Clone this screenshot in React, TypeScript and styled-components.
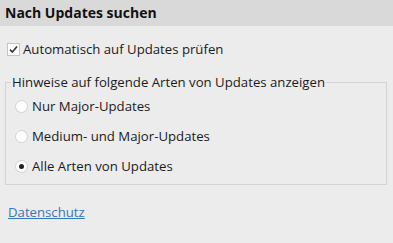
import React from "react";
import styled, { createGlobalStyle } from "styled-components";

const Global = createGlobalStyle`
  html, body { margin: 0; padding: 0; background: #ececec; }
  body { font-family: "Open Sans", "Noto Sans", "DejaVu Sans", sans-serif; color: #1b1b1b; }
`;

const Page = styled.div`
  width: 393px;
  height: 243px;
  background: #ececec;
  display: flex;
  flex-direction: column;
`;

const Header = styled.div`
  height: 26px;
  background: #d9d9d9;
  padding-left: 5px;
  font-weight: 700;
  font-size: 14px;
  line-height: 26px;
  color: #111;
`;

const CheckRow = styled.label`
  display: flex;
  align-items: center;
  gap: 3px;
  height: 20px;
  margin: 13px 0 0 7px;
  font-size: 13.2px;
`;

const Box = styled.span`
  width: 11px;
  height: 11px;
  border: 1px solid #c4c4c4;
  background: #fff;
  display: flex;
  align-items: center;
  justify-content: center;
`;

const Group = styled.fieldset`
  margin: 14px 6px 0 5px;
  padding: 0 0 3px 9px;
  border: 1px solid #d3d3d3;
  min-width: 0;
`;

const Legend = styled.legend`
  padding: 0 1px;
  margin-left: -4px;
  font-size: 13.2px;
  line-height: 18px;
`;

const RadioRow = styled.label`
  display: flex;
  align-items: center;
  gap: 4px;
  height: 30px;
  font-size: 13.2px;
`;

const Radio = styled.span<{ $on?: boolean }>`
  width: 11px;
  height: 11px;
  border-radius: 50%;
  border: 1px solid #d2d2d2;
  background: #fff;
  display: flex;
  align-items: center;
  justify-content: center;
  &::after {
    content: "";
    width: 5px;
    height: 5px;
    border-radius: 50%;
    background: ${(p) => (p.$on ? "#222" : "transparent")};
  }
`;

const Link = styled.a`
  margin: 17px 0 0 8px;
  font-size: 13.2px;
  line-height: 20px;
  color: #3a75b6;
  text-decoration: underline;
  align-self: flex-start;
`;

const options = [
  { label: "Nur Major-Updates", on: false },
  { label: "Medium- und Major-Updates", on: false },
  { label: "Alle Arten von Updates", on: true },
];

export default function App() {
  return (
    <Page>
      <Global />
      <Header>Nach Updates suchen</Header>
      <CheckRow>
        <Box>
          <svg width="9" height="9" viewBox="0 0 9 9">
            <path d="M1 4.6 L3.4 7 L8 1.6" fill="none" stroke="#333" strokeWidth="1.6" />
          </svg>
        </Box>
        Automatisch auf Updates prüfen
      </CheckRow>
      <Group>
        <Legend>Hinweise auf folgende Arten von Updates anzeigen</Legend>
        {options.map((o) => (
          <RadioRow key={o.label}>
            <Radio $on={o.on} />
            {o.label}
          </RadioRow>
        ))}
      </Group>
      <Link href="#">Datenschutz</Link>
    </Page>
  );
}
